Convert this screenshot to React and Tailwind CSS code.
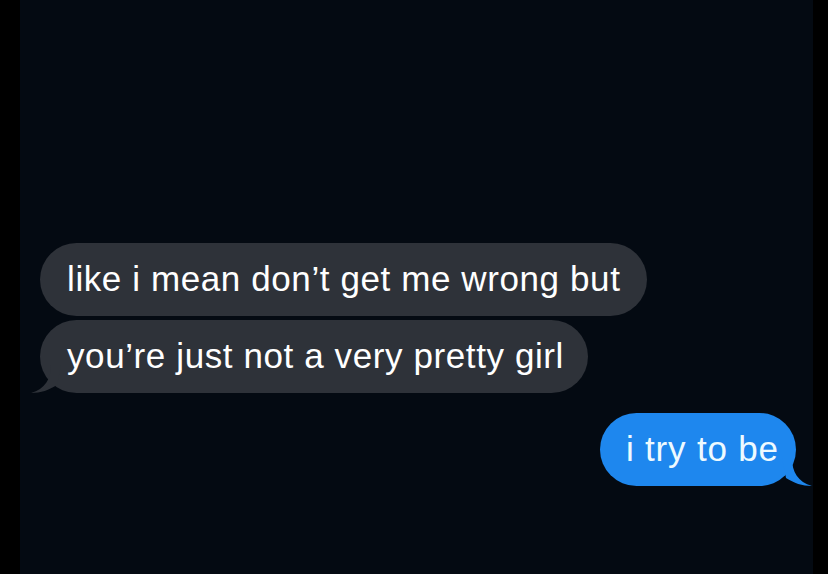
import React from 'react';

function Bubble({ children, tail, className }) {
  return (
    <div className={`relative h-[73px] rounded-[37px] flex items-center ${className}`}>
      {children}
      {tail}
    </div>
  );
}

export default function App() {
  return (
    <div className="w-full h-[574px] bg-black flex overflow-hidden" style={{ fontFamily: '"Liberation Sans", Arial, sans-serif' }}>
      <div className="ml-[20px] w-[793px] h-full bg-[#040a12] flex flex-col pt-[243px]">
        {/* incoming messages */}
        <div className="flex flex-col items-start gap-[4px] pl-[20px]">
          <Bubble className="bg-[#2e3239] w-[607px] pl-[27px]">
            <span className="text-white text-[35px] tracking-[0.6px]">like i mean don’t get me wrong but</span>
          </Bubble>
          <Bubble
            className="bg-[#2e3239] w-[548px] pl-[27px]"
            tail={
              <svg className="absolute left-[-9px] bottom-0" width="30" height="28" viewBox="0 0 30 28">
                <path d="M20 0 C20 14 14 24 0 28 C10 28 18 25 26 20 L30 0 Z" fill="#2e3239" />
              </svg>
            }
          >
            <span className="text-white text-[35px] tracking-[0.6px]">you’re just not a very pretty girl</span>
          </Bubble>
        </div>
        {/* outgoing message */}
        <div className="flex justify-end pr-[17px] mt-[20px]">
          <Bubble
            className="bg-[#1e87ee] w-[196px] pl-[26px]"
            tail={
              <svg className="absolute right-[-16px] bottom-0" width="30" height="28" viewBox="0 0 30 28">
                <path d="M10 0 C10 14 16 24 30 28 C20 28 12 25 4 20 L0 0 Z" fill="#1e87ee" />
              </svg>
            }
          >
            <span className="text-[#eefaff] text-[35px] tracking-[0.8px]">i try to be</span>
          </Bubble>
        </div>
      </div>
    </div>
  );
}
